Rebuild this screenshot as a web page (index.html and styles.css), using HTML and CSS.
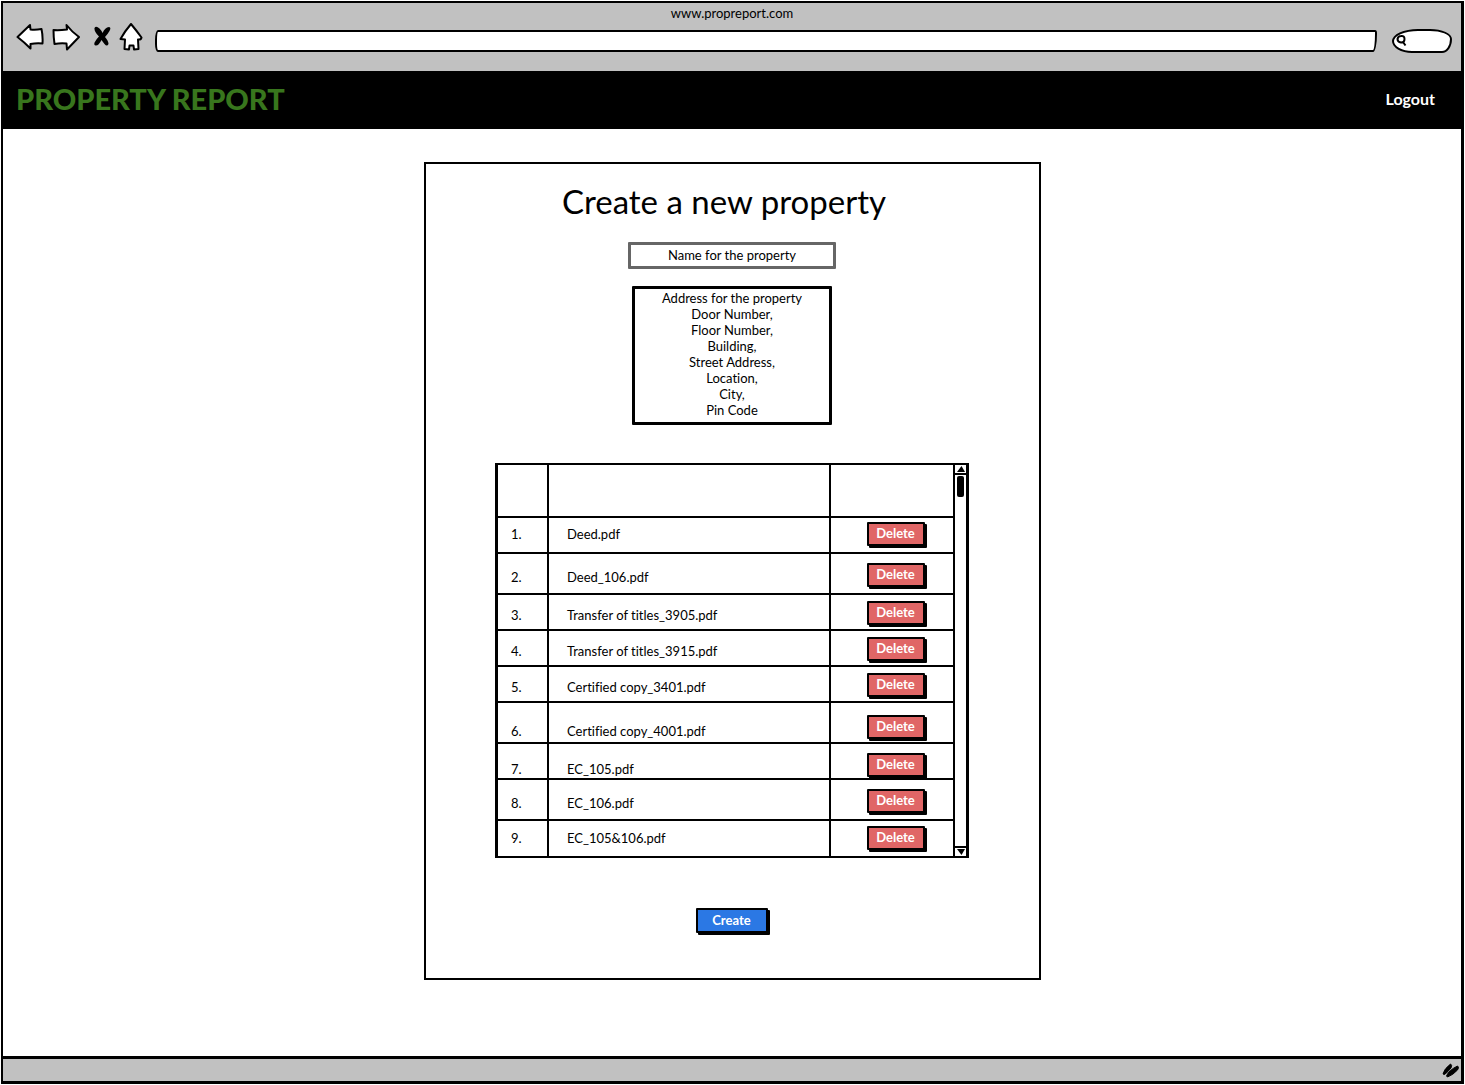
FILE: index.html
```html
<!DOCTYPE html>
<html lang="en">
<head>
<meta charset="utf-8">
<meta name="viewport" content="width=device-width, initial-scale=1">
<title>Property Report</title>
<link rel="stylesheet" href="styles.css">
</head>
<body>
<div class="window">
  <div class="chrome">
    <p class="chrome-title">www.propreport.com</p>
    <div class="toolbar">
      <div class="nav">
        <button class="icon-button" type="button" aria-label="Back">
          <svg width="28" height="28" viewBox="0 0 28 28"><path d="M1.500 14 L14 2 L14.500 6.500 Q20 7 25.500 6 Q27 13 26.500 20.500 Q20 20 14.500 21 L14.500 25.500 Q8 19 1.500 14 Z"/></svg>
        </button>
        <button class="icon-button" type="button" aria-label="Forward">
          <svg width="28" height="28" viewBox="0 0 28 28"><path d="M1.500 7 Q7 7.500 15 6.500 L14.500 2 Q20 9 27 14 L15 26.500 L14.500 20.500 Q8 20 2.500 21 Q1.500 14 1.500 7 Z"/></svg>
        </button>
        <button class="icon-button stop" type="button" aria-label="Stop">
          <svg width="18" height="28" viewBox="0 0 18 28"><path class="solid" d="M1.500 5 Q3 2.500 6.500 5.500 Q8.500 7.500 9.500 10 Q12 4.500 16 4 Q18.500 4.500 16.500 8 Q14.500 11.500 12 14 Q15.500 18 15.500 21 Q14 24 11.500 21 Q9.500 18.500 8.500 17 Q5.500 23 2.500 22.500 Q0 21.500 2.500 18 Q4 15.500 6 13.500 Q1 8.500 1.500 5 Z"/></svg>
        </button>
        <button class="icon-button" type="button" aria-label="Home">
          <svg width="24" height="28" viewBox="0 0 24 28"><path d="M12 1 Q17 7 22.500 14.500 Q22 17 19 16.500 L19.500 26 L15 26.500 L14.500 22.500 L10.500 22.500 L10 26.500 L5.500 26 L6 16.500 L1.500 16 Q6 8 12 1 Z"/></svg>
        </button>
      </div>
      <input class="address" type="text" aria-label="Web address">
      <label class="search">
        <svg width="14" height="16" viewBox="0 0 14 16"><path class="lens" d="M6 3 Q9.500 2.500 9.500 6 Q9.500 9.500 6 9.500 Q2.500 9 2.500 6 Q3 3 6 3 M8 9 L10.500 12.500"/></svg>
        <input class="search-input" type="search" aria-label="Search">
      </label>
    </div>
  </div>

  <header class="site-header">
    <h1 class="brand">PROPERTY REPORT</h1>
    <a class="logout" href="#">Logout</a>
  </header>

  <main class="page">
    <form class="card">
      <h2 class="card-title">Create a new property</h2>
      <input class="name-field" type="text" aria-label="Name for the property" value="Name for the property">
      <textarea class="address-field" rows="8" aria-label="Address for the property">Address for the property
Door Number,
Floor Number,
Building,
Street Address,
Location,
City,
Pin Code</textarea>
      <div class="files">
        <table class="file-table" aria-label="Files">
          <thead><tr><th class="col-number"></th><th class="col-name"></th><th class="col-action"></th></tr></thead>
          <tbody>
            <tr class="tight"><td>1.</td><td>Deed.pdf</td><td><button class="delete" type="button">Delete</button></td></tr>
            <tr class="tall"><td>2.</td><td>Deed_106.pdf</td><td><button class="delete" type="button">Delete</button></td></tr>
            <tr><td>3.</td><td>Transfer of titles_3905.pdf</td><td><button class="delete" type="button">Delete</button></td></tr>
            <tr><td>4.</td><td>Transfer of titles_3915.pdf</td><td><button class="delete" type="button">Delete</button></td></tr>
            <tr><td>5.</td><td>Certified copy_3401.pdf</td><td><button class="delete" type="button">Delete</button></td></tr>
            <tr class="tall low"><td>6.</td><td>Certified copy_4001.pdf</td><td><button class="delete" type="button">Delete</button></td></tr>
            <tr class="low"><td>7.</td><td>EC_105.pdf</td><td><button class="delete" type="button">Delete</button></td></tr>
            <tr class="tall"><td>8.</td><td>EC_106.pdf</td><td><button class="delete" type="button">Delete</button></td></tr>
            <tr class="tight"><td>9.</td><td>EC_105&amp;106.pdf</td><td><button class="delete" type="button">Delete</button></td></tr>
          </tbody>
        </table>
        <div class="scrollbar">
          <button class="scroll-arrow up" type="button" aria-label="Scroll up"><svg width="10" height="8" viewBox="0 0 10 8"><path d="M5.500 1 L9 7 L1 7 Z"/></svg></button>
          <div class="scroll-track"><div class="scroll-thumb"></div></div>
          <button class="scroll-arrow down" type="button" aria-label="Scroll down"><svg width="10" height="8" viewBox="0 0 10 8"><path d="M1 1 L9 1 L5.500 7 Z"/></svg></button>
        </div>
      </div>
      <button class="create" type="submit">Create</button>
    </form>
  </main>

  <footer class="statusbar">
    <svg width="20" height="16" viewBox="0 0 20 16"><path d="M2 12 Q3 7 9.500 2 Q11.500 3 10 6 Q7 10 3.500 12.500 Z M5.500 14 Q7.500 8.500 16.500 4 Q18.500 5 16.500 8 Q12 13 6.500 15 Z"/></svg>
  </footer>
</div>
</body>
</html>
```
FILE: styles.css
```css
* {
  box-sizing: border-box;
}

body {
  margin: 0;
  background: #fff;
  color: #000;
  font: 13px/16px Lato, "Open Sans", sans-serif;
  font-variant-ligatures: none;
}

button,
input,
textarea {
  color: inherit;
  font: inherit;
  font-variant-ligatures: none;
}

svg {
  display: block;
}

.window {
  display: flex;
  flex-direction: column;
  min-height: 100vh;
  padding: 1px;
}

.window > * {
  border: 0 solid #000;
  border-width: 0 3px 0 2px;
}

.chrome {
  height: 70px;
  border-top-width: 2px;
  background: #c1c1c1;
}

.chrome-title {
  margin: 0;
  padding-top: 2px;
  text-align: center;
}

.toolbar {
  display: flex;
  align-items: flex-start;
  gap: 12px;
  padding: 2px 9px 0 13px;
}

.nav {
  display: flex;
  gap: 8px;
}

.icon-button {
  padding: 0;
  border: 0;
  background: none;
}

.icon-button path {
  fill: #fff;
  stroke: #000;
  stroke-width: 2;
  stroke-linejoin: round;
}

.icon-button .solid {
  fill: #000;
  stroke: none;
}

.stop {
  margin-left: 5px;
}

.address {
  flex: 1;
  min-width: 0;
  height: 22px;
  margin-top: 7px;
  padding: 0 8px;
  border: 2px solid #000;
  border-radius: 3px 2px 4px 3px / 10px 3px 18px 8px;
  background: #fff;
}

.search {
  display: flex;
  align-items: center;
  width: 60px;
  height: 24px;
  margin: 6px 0 0 3px;
  padding-left: 1px;
  border: 2px solid #000;
  border-radius: 26px 22px 10px 20px / 12px 10px 14px 12px;
  background: #fff;
}

.search svg {
  flex: none;
}

.lens {
  fill: none;
  stroke: #000;
  stroke-width: 2;
}

.search-input {
  width: 100%;
  min-width: 0;
  padding: 0;
  border: 0;
  background: none;
}

.site-header {
  display: flex;
  align-items: center;
  justify-content: space-between;
  height: 58px;
  padding: 0 26px 3px 13px;
  background: #000;
}

.brand {
  margin: 0;
  color: #38761d;
  font-size: 29px;
  font-weight: 900;
  line-height: 32px;
}

.logout {
  color: #fff;
  font-size: 16px;
  font-weight: 700;
  text-decoration: none;
}

.page {
  display: flex;
  flex: 1;
  justify-content: center;
  align-items: flex-start;
  padding: 33px 16px;
}

.card {
  display: flex;
  flex-direction: column;
  align-items: center;
  width: 100%;
  max-width: 617px;
  padding: 18px 16px 45px;
  border: 2px solid #000;
}

.card-title {
  margin: 0 16px 22px 0;
  font-size: 33px;
  font-weight: 400;
  line-height: 38px;
}

.name-field {
  width: 208px;
  height: 27px;
  padding: 0 0 2px;
  border: 3px solid #666;
  border-radius: 1px;
  text-align: center;
}

.address-field {
  width: 200px;
  height: 139px;
  margin-top: 17px;
  padding: 1px 0;
  border: 3px solid #000;
  border-radius: 1px;
  overflow: hidden;
  resize: none;
  text-align: center;
}

.files {
  display: flex;
  width: 474px;
  max-width: 100%;
  margin-top: 38px;
  border: 2px solid #000;
  border-width: 2px 3px;
}

.file-table {
  flex: 1;
  border-collapse: collapse;
  table-layout: fixed;
}

.file-table th,
.file-table td {
  padding: 6px 0 0 13px;
  border-bottom: 2px solid #000;
  text-align: left;
}

.file-table th {
  height: 52px;
}

.file-table td {
  height: 36px;
}

.file-table .tall td {
  height: 41px;
}

.file-table th + th,
.file-table td + td {
  padding-left: 18px;
  border-left: 2px solid #000;
}

.file-table td:last-child {
  padding: 2px 0 0 36px;
}

.file-table .tight td {
  padding-top: 0;
  padding-bottom: 2px;
}

.file-table .low td {
  padding-top: 16px;
}

.file-table .low td:last-child {
  padding-top: 8px;
}

.file-table tr:last-child td {
  border-bottom: 0;
}

.col-number {
  width: 50px;
}

.col-action {
  width: 123px;
}

.delete,
.create {
  display: block;
  padding: 0 1px 2px 0;
  border: 2px solid #000;
  border-radius: 1px;
  box-shadow: 2px 2px 0 #000;
  color: #fff;
  font-weight: 700;
}

.delete {
  width: 58px;
  height: 24px;
  background: #e06666;
}

.create {
  width: 72px;
  height: 25px;
  margin-top: 50px;
  background: #2b78e4;
}

.scrollbar {
  display: flex;
  flex-direction: column;
  width: 13px;
  border-left: 2px solid #000;
}

.scroll-arrow {
  display: flex;
  align-items: center;
  justify-content: center;
  height: 10px;
  padding: 0;
  border: 0 solid #000;
  background: #fff;
}

.up {
  border-bottom-width: 2px;
}

.down {
  border-top-width: 2px;
}

.scroll-track {
  flex: 1;
  padding: 1px 2px;
}

.scroll-thumb {
  height: 21px;
  border-radius: 2px;
  background: #000;
}

.statusbar {
  display: flex;
  align-items: center;
  justify-content: flex-end;
  height: 28px;
  border-top-width: 3px;
  border-bottom-width: 3px;
  background: #c1c1c1;
}

.statusbar path {
  fill: #000;
  stroke: #000;
  stroke-width: 1;
}
```
